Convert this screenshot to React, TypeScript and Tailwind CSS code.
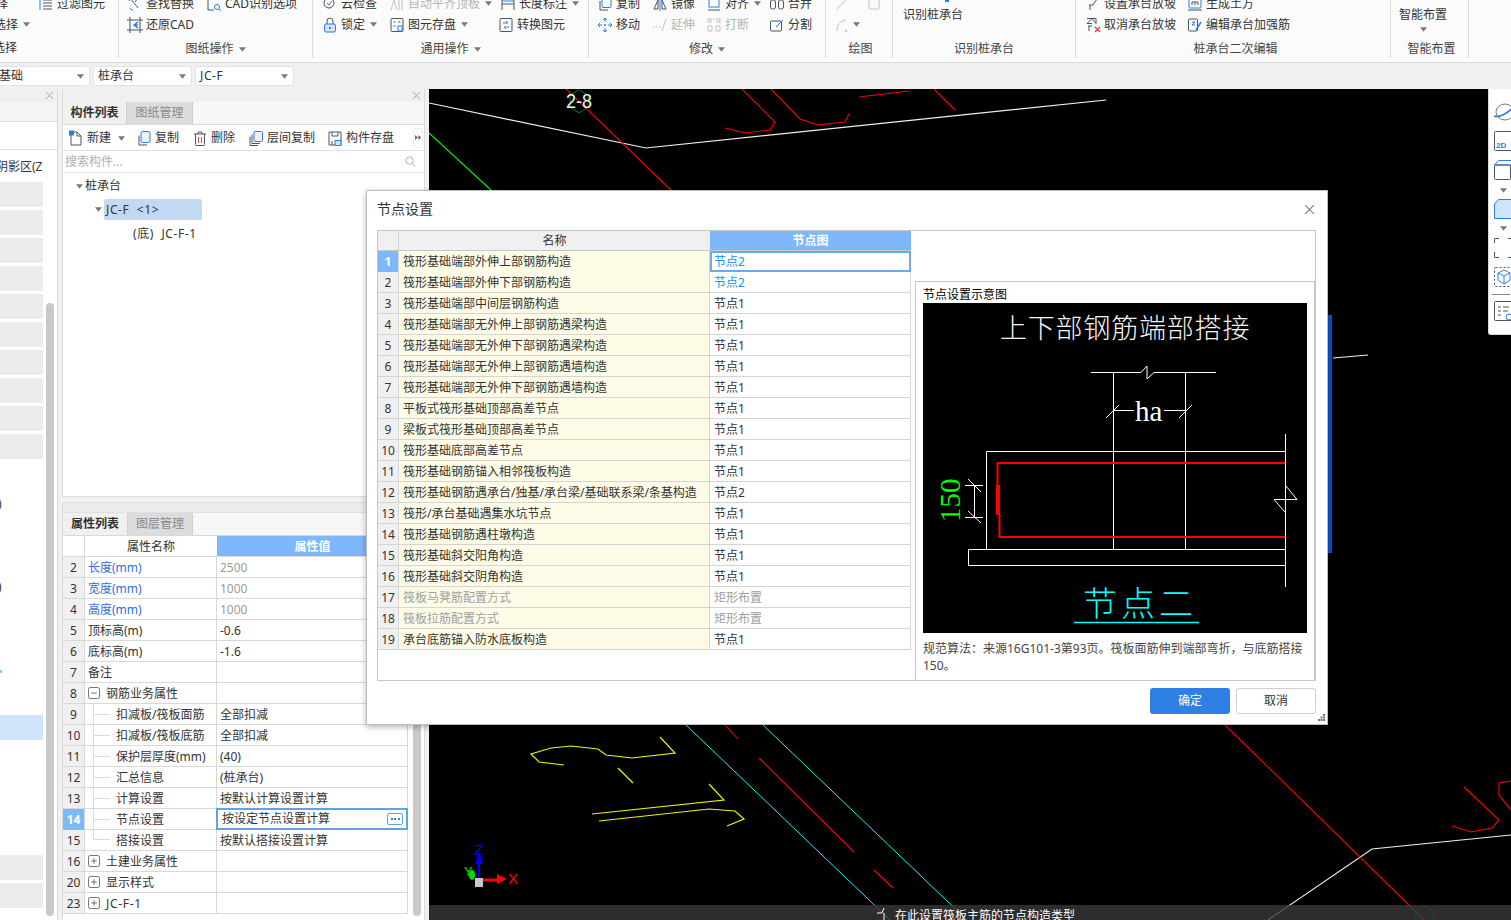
import type { ReactNode } from 'react';

const D = '#4b5563';
const B = '#2b7de9';
const G = '#c2c2c2';

const icons: Record<string, ReactNode> = {
  filter: <g stroke={D}><path d="M2 3v11" stroke={B} /><path d="M5 4h9M5 7h9M5 10h9M5 13h9" /></g>,
  find: <g stroke={D}><path d="M3 2l8 10M11 2l-3 4" /><path d="M3 12a3 3 0 0 0 3 2" stroke={B} /><path d="M2 5a4 4 0 0 1 3-3" stroke={B} /></g>,
  cad: <g stroke={D}><path d="M2 2v12h6" /><circle cx="11" cy="11" r="2.5" stroke={B} /><path d="M13 13l2 2" stroke={B} /></g>,
  check: <g stroke={D}><circle cx="7" cy="7" r="5" /><path d="M5 7l2 2 3-4" stroke={B} /></g>,
  level: <g stroke={G}><path d="M2 14l3-10 3 10M10 2v12M13 2v12" /></g>,
  dim: <g stroke={D}><path d="M2 2v12M14 2v12M2 8h12" /><path d="M2 5h12" stroke={B} /></g>,
  copy: <g stroke={D}><rect x="5" y="1.5" width="9" height="10" rx="1" stroke={B} /><path d="M3 5v9h8" /></g>,
  mirror: <g stroke={D}><path d="M8 1v14" stroke={B} /><path d="M6 4v9H2zM10 4v9h4z" /></g>,
  align: <g stroke={D}><path d="M2 14h12" /><rect x="3" y="3" width="10" height="8" stroke={B} /></g>,
  merge: <g stroke={D}><rect x="1.5" y="4" width="5" height="9" rx="2" /><rect x="9.5" y="4" width="5" height="9" rx="2" /></g>,
  restore: <g stroke={D}><path d="M3 0v16M13 0v16M0 3h16M0 13h16" /><path d="M11 5L7 8l4 3M7 8h4" stroke={B} strokeWidth="1.5" /></g>,
  lock: <g stroke={D}><rect x="2.5" y="7" width="11" height="8" rx="1.5" fill="#cfe3fb" stroke={B} /><path d="M5 7V4a3 3 0 0 1 6 0v3" /><path d="M8 10v2" strokeWidth="1.5" /></g>,
  save: <g stroke={D}><rect x="2" y="1.5" width="12" height="13" rx="1" /><path d="M4.5 5h2M9 5h2.500M4.500 9h2" /><rect x="9" y="9" width="4" height="5" stroke={B} /></g>,
  convert: <g stroke={D}><rect x="2" y="1.500" width="12" height="13" rx="1" /><path d="M5 6h5l-2-2M11 10H6l2 2" stroke={B} /></g>,
  move: <g stroke={B}><path d="M8 1v4M8 11v4M1 8h4M11 8h4M6 3l2-2 2 2M6 13l2 2 2-2M3 6L1 8l2 2M13 6l2 2-2 2" /><circle cx="8" cy="8" r="1" fill={B} stroke="none" /></g>,
  extend: <g stroke={G}><path d="M1 10h1.500M4 10h1.500M7 10h2" /><path d="M14 2L10 14" /></g>,
  breakIt: <g stroke={G}><rect x="2" y="2" width="3" height="3" /><rect x="11" y="2" width="3" height="3" /><path d="M2 9h4v5H2zM10 9h4v5h-4zM8 1v2" /></g>,
  split: <g stroke={D}><rect x="1.500" y="4" width="11" height="10" rx="1" /><path d="M7 10l7-7" stroke={B} /></g>,
  slope: <g stroke={D}><path d="M2 3h10l-4 6H4M5 9v5" /><path d="M6 2h8" stroke={B} /></g>,
  earth: <g stroke={D}><rect x="2" y="1" width="12" height="11" rx="1" stroke={B} /><path d="M5 9V6h6v3M8 6v3M1 14h14" /></g>,
  cancelSlope: <g stroke={D}><path d="M2 1.500h9v5l-4-5-5 5h5M3 9h4M4 9v5" /><path d="M10 10l5 5M15 10l-5 5" stroke="#e53935" strokeWidth="1.200" /></g>,
  rebar: <g stroke={D}><rect x="1.500" y="2" width="9" height="12" rx="1" /><path d="M5 5h3l-3 3h3" stroke={B} /><path d="M9 13l5-8" stroke={B} strokeWidth="1.500" /></g>,
  line: <g stroke={G}><path d="M3 13L13 3" /></g>,
  square: <g stroke={G}><rect x="3" y="3" width="10" height="10" rx="1" /></g>,
  arc: <g stroke={G}><path d="M3 14c0-6 3-10 9-11" /><circle cx="12" cy="14" r="1" /></g>,
  fresh: <g stroke={D}><path d="M3 1.500h6l4 4v9H3z" /><path d="M9 1.500v4h4" /><rect x="1" y="0" width="5" height="5" fill={B} stroke="none" /></g>,
  dup: <g stroke={D}><rect x="5" y="1" width="9" height="11" rx="1.500" fill="#e8f1fd" stroke={B} /><path d="M3 5v9.500h8" /></g>,
  trash: <g stroke={D}><path d="M2 3.500h12M6 3.500V1.500h4v2M3.500 3.500V14a1 1 0 0 0 1 1h7a1 1 0 0 0 1-1V3.500" /><path d="M6.500 6.500v6M9.500 6.500v6" stroke="#d9534f" /></g>,
  layerCopy: <g stroke={D}><rect x="6" y="1" width="8.500" height="10" rx="1" fill="#e8f1fd" stroke={B} /><path d="M4 4v9h8M2 6v9h8" /></g>,
  store: <g stroke={D}><path d="M2 1.500h12v13H2zM5 1.500v4h6v-4M5 14.500v-4" /><rect x="8" y="10" width="6" height="5" fill="#cfe3fb" stroke={B} /></g>,
};

function Icon({ name, size = 'w-[16px] h-[16px]' }: { name: string; size?: string }) {
  return (
    <svg viewBox="0 0 16 16" fill="none" strokeWidth="1" className={`shrink-0 ${size}`}>
      {icons[name]}
    </svg>
  );
}

function Caret({ className = '' }: { className?: string }) {
  return (
    <svg viewBox="0 0 8 5" className={`w-[7px] h-[5px] shrink-0 ${className}`}>
      <path d="M0 0h8L4 5z" fill="#7a7a7a" />
    </svg>
  );
}

function Tool({ icon, label, width, gray, caret }: { icon: string; label: string; width: string; gray?: boolean; caret?: boolean }) {
  return (
    <div className={`flex items-center gap-[3px] h-[21px] whitespace-nowrap ${width} ${gray ? 'text-[#b5b5b5]' : 'text-[#333]'}`}>
      <Icon name={icon} />
      <span>{label}</span>
      {caret && <Caret className="ml-[2px]" />}
    </div>
  );
}

function Group({ width, label, caret, children, labelClass = '' }: { width: string; label: string; caret?: boolean; children?: ReactNode; labelClass?: string }) {
  return (
    <div className={`flex flex-col shrink-0 h-[65px] border-r border-[#dcdcdc] ${width}`}>
      <div className="h-[47px] overflow-hidden">{children}</div>
      <div className={`flex items-center justify-center gap-[5px] h-[18px] text-[#444] ${labelClass}`}>
        <span>{label}</span>
        {caret && <Caret />}
      </div>
    </div>
  );
}

function Ribbon() {
  return (
    <div className="h-[63px] shrink-0 bg-[#fbfbfb] border-b border-[#d9d9d9] overflow-hidden">
      <div className="flex -mt-[7px]">
        <div className="flex flex-col shrink-0 w-[119px] h-[65px] border-r border-[#dcdcdc] text-[#333]">
          <div className="flex items-center h-[21px]">
            <span className="-ml-[16px] w-[54px]">选择</span>
            <Tool icon="filter" label="过滤图元" width="w-[70px]" />
          </div>
          <div className="flex items-center gap-[5px] h-[21px] -ml-[6px]">
            <span>选择</span>
            <Caret />
          </div>
          <div className="h-[5px]" />
          <div className="h-[18px] -ml-[7px]">选择</div>
        </div>
        <Group width="w-[194px]" label="图纸操作" caret>
          <div className="pl-[8px]">
            <div className="flex">
              <Tool icon="find" label="查找替换" width="w-[79px]" />
              <Tool icon="cad" label="CAD识别选项" width="w-[100px]" />
            </div>
            <Tool icon="restore" label="还原CAD" width="w-[90px]" />
          </div>
        </Group>
        <Group width="w-[276px]" label="通用操作" caret>
          <div className="pl-[9px]">
            <div className="flex">
              <Tool icon="check" label="云检查" width="w-[67px]" />
              <Tool icon="level" label="自动平齐顶板" width="w-[111px]" gray caret />
              <Tool icon="dim" label="长度标注" width="w-[84px]" caret />
            </div>
            <div className="flex">
              <Tool icon="lock" label="锁定" width="w-[67px]" caret />
              <Tool icon="save" label="图元存盘" width="w-[109px]" caret />
              <Tool icon="convert" label="转换图元" width="w-[80px]" />
            </div>
          </div>
        </Group>
        <Group width="w-[237px]" label="修改" caret>
          <div className="pl-[8px]">
            <div className="flex">
              <Tool icon="copy" label="复制" width="w-[55px]" />
              <Tool icon="mirror" label="镜像" width="w-[54px]" />
              <Tool icon="align" label="对齐" width="w-[63px]" caret />
              <Tool icon="merge" label="合并" width="w-[50px]" />
            </div>
            <div className="flex">
              <Tool icon="move" label="移动" width="w-[55px]" />
              <Tool icon="extend" label="延伸" width="w-[54px]" gray />
              <Tool icon="breakIt" label="打断" width="w-[63px]" gray />
              <Tool icon="split" label="分割" width="w-[50px]" />
            </div>
          </div>
        </Group>
        <Group width="w-[67px]" label="绘图" labelClass="pl-[3px]">
          <div className="pl-[8px]">
            <div className="flex h-[21px] items-center gap-[16px]">
              <Icon name="line" />
              <Icon name="square" />
            </div>
            <div className="flex h-[21px] items-center gap-[3px]">
              <Icon name="arc" />
              <Caret />
            </div>
          </div>
        </Group>
        <Group width="w-[183px]" label="识别桩承台">
          <div className="h-[9px] pl-[52px]"><div className="w-[4px] h-[9px] bg-[#2b7de9]" /></div>
          <div className="pl-[10px] mt-[2px] h-[21px] flex items-center text-[#333]">识别桩承台</div>
        </Group>
        <Group width="w-[315px]" label="桩承台二次编辑" labelClass="pl-[5px]">
          <div className="pl-[9px]">
            <div className="flex">
              <Tool icon="slope" label="设置承台放坡" width="w-[102px]" />
              <Tool icon="earth" label="生成土方" width="w-[80px]" />
            </div>
            <div className="flex">
              <Tool icon="cancelSlope" label="取消承台放坡" width="w-[102px]" />
              <Tool icon="rebar" label="编辑承台加强筋" width="w-[110px]" />
            </div>
          </div>
        </Group>
        <Group width="w-[78px]" label="智能布置" labelClass="pl-[4px]">
          <div className="pl-[8px] flex flex-col">
            <div className="h-[12px] -mt-[1px] w-[62px] flex justify-center items-start">
              <svg viewBox="0 0 16 10" className="w-[14px] h-[10px]"><path d="M2 0h5v8H2zM9 0h5v8H9z" fill={B} /></svg>
            </div>
            <div className="h-[21px] text-[#333] flex items-center">智能布置</div>
            <div className="w-[48px] flex justify-center mt-[2px]"><Caret /></div>
          </div>
        </Group>
      </div>
    </div>
  );
}

function Combo({ width, children }: { width: string; children: ReactNode }) {
  return (
    <div className={`flex items-center justify-between h-[20px] pl-[4px] pr-[5px] bg-white border border-[#e3e3e3] rounded-[3px] overflow-hidden whitespace-nowrap text-[#333] ${width}`}>
      <span>{children}</span>
      <Caret className="w-[5px] h-[3px]" />
    </div>
  );
}

function CloseMark({ className = '', color = '#a0a0a0' }: { className?: string; color?: string }) {
  return (
    <svg viewBox="0 0 10 10" className={`w-[9px] h-[9px] ${className}`} fill="none" stroke={color}>
      <path d="M1 1l8 8M9 1l-8 8" />
    </svg>
  );
}

function LeftPanel() {
  return (
    <div className="flex flex-col w-[58px] shrink-0 bg-white border-r border-[#d6d6d6] overflow-hidden text-[#333]">
      <div className="flex items-center justify-end h-[13px] pr-[3px] bg-[#f0f0f0]">
        <CloseMark />
      </div>
      <div className="h-[20px] bg-[#f5f5f5] border-b border-[#e0e0e0]" />
      <div className="h-[28px] border-b border-[#e0e0e0]" />
      <div className="flex flex-1">
        <div className="w-[43px] overflow-hidden">
          <div className="h-[32px] pt-[2px] flex items-center whitespace-nowrap -ml-[4px]">阴影区(Z</div>
          {[0, 1, 2, 3, 4, 5, 6, 7, 8, 9].map((i) => (
            <div key={i} className="h-[25px] mb-[3px] bg-[#ececec]" />
          ))}
          <div className="h-[20px] mt-[35px] -ml-[2px] leading-[20px]">)</div>
          <div className="h-[20px] mt-[63px] -ml-[2px] leading-[20px]">)</div>
          <div className="h-[3px] w-[2px] mt-[73px] bg-[#5fd6f5]" />
          <div className="h-[25px] mt-[42px] bg-[#cfe3fb]" />
          <div className="h-[25px] mt-[115px] bg-[#ececec]" />
          <div className="h-[25px] mt-[3px] bg-[#ececec]" />
        </div>
        <div className="w-[8px] ml-[3px] mt-[153px] h-[613px] rounded-[4px] bg-[#c9c9c9]" />
      </div>
    </div>
  );
}

function Tab({ active, children, width }: { active?: boolean; children: ReactNode; width: string }) {
  return (
    <div className={`flex items-center justify-center h-[22px] ${width} ${active ? 'bg-[#f0f0f0] text-[#333] font-bold' : 'bg-[#dcdcdc] text-[#8a8a8a]'} border-r border-[#cfcfcf]`}>
      {children}
    </div>
  );
}

function ListTool({ icon, label, caret, width }: { icon: string; label: string; caret?: boolean; width: string }) {
  return (
    <div className={`flex items-center gap-[3px] shrink-0 pt-[1px] ${width}`}>
      <Icon name={icon} size="w-[16px] h-[17px]" />
      <span>{label}</span>
      {caret && <Caret className="ml-[4px] w-[5px] h-[3px]" />}
    </div>
  );
}

function ComponentList() {
  return (
    <div className="flex flex-col h-[408px] bg-white border border-[#dcdcdc] border-t-0">
      <div className="flex items-center justify-end h-[13px] pr-[3px] bg-[#f0f0f0]">
        <CloseMark />
      </div>
      <div className="flex h-[23px] bg-[#f7f7f7] border-b border-[#d9d9d9]">
        <Tab active width="w-[64px]">构件列表</Tab>
        <Tab width="w-[66px]">图纸管理</Tab>
      </div>
      <div className="flex items-center h-[26px] pl-[5px] border-b border-[#e3e3e3] text-[#333]">
        <ListTool icon="fresh" label="新建" caret width="w-[68px]" />
        <ListTool icon="dup" label="复制" width="w-[56px]" />
        <ListTool icon="trash" label="删除" width="w-[56px]" />
        <ListTool icon="layerCopy" label="层间复制" width="w-[79px]" />
        <ListTool icon="store" label="构件存盘" width="w-[86px]" />
        <div className="flex items-center justify-center w-[10px] h-[20px] rounded-[3px] border border-[#ececec]">
          <svg viewBox="0 0 8 6" className="w-[7px] h-[5px]"><path d="M0 0l3 3-3 3zM4 0l3 3-3 3z" fill="#555" /></svg>
        </div>
      </div>
      <div className="flex items-center justify-between h-[22px] pl-[2px] pr-[8px] border-b border-[#e3e3e3] text-[#b0b0b0]">
        <span>搜索构件...</span>
        <svg viewBox="0 0 12 12" className="w-[11px] h-[11px]" fill="none" stroke="#aaa"><circle cx="5" cy="5" r="4" /><path d="M8 8l3 3" /></svg>
      </div>
      <div className="flex-1 text-[#333]">
        <div className="flex items-center h-[24px] mt-[1px] pl-[13px] gap-[2px]">
          <Caret className="w-[6px] h-[4px]" />
          <span>桩承台</span>
        </div>
        <div className="flex items-center h-[22px] pl-[32px]">
          <Caret className="w-[6px] h-[4px] mr-[2px]" />
          <div className="flex items-center w-[98px] h-[21px] pl-[2px] pt-[1px] bg-[#c1d9f2] rounded-[2px] whitespace-pre tracking-[0.6px]">JC-F  &lt;1&gt;</div>
        </div>
        <div className="flex items-center h-[28px] pl-[70px] whitespace-pre tracking-[0.6px]">(底)  JC-F-1</div>
      </div>
    </div>
  );
}

type PropRow = {
  no: number;
  name: string;
  value?: string;
  blue?: boolean;
  muted?: boolean;
  tree?: 'open' | 'closed';
  child?: boolean;
  last?: boolean;
  selected?: boolean;
};

const propRows: PropRow[] = [
  { no: 2, name: '长度(mm)', value: '2500', blue: true, muted: true },
  { no: 3, name: '宽度(mm)', value: '1000', blue: true, muted: true },
  { no: 4, name: '高度(mm)', value: '1000', blue: true, muted: true },
  { no: 5, name: '顶标高(m)', value: '-0.6' },
  { no: 6, name: '底标高(m)', value: '-1.6' },
  { no: 7, name: '备注' },
  { no: 8, name: '钢筋业务属性', tree: 'open' },
  { no: 9, name: '扣减板/筏板面筋', value: '全部扣减', child: true },
  { no: 10, name: '扣减板/筏板底筋', value: '全部扣减', child: true },
  { no: 11, name: '保护层厚度(mm)', value: '(40)', child: true },
  { no: 12, name: '汇总信息', value: '(桩承台)', child: true },
  { no: 13, name: '计算设置', value: '按默认计算设置计算', child: true },
  { no: 14, name: '节点设置', value: '按设定节点设置计算', child: true, selected: true },
  { no: 15, name: '搭接设置', value: '按默认搭接设置计算', child: true, last: true },
  { no: 16, name: '土建业务属性', tree: 'closed' },
  { no: 20, name: '显示样式', tree: 'closed' },
  { no: 23, name: 'JC-F-1', tree: 'closed' },
];

function TreeBox({ open }: { open: boolean }) {
  return (
    <svg viewBox="0 0 13 13" className="w-[12px] h-[12px] shrink-0 mr-[6px]" fill="none" stroke="#666">
      <rect x="0.5" y="0.5" width="12" height="12" rx="2" />
      <path d={open ? 'M3.500 6.500h6' : 'M3.500 6.500h6M6.500 3.500v6'} />
    </svg>
  );
}

function PropertyTable() {
  return (
    <div className="flex flex-col flex-1 mt-[5px] bg-white border-x border-[#dcdcdc]">
      <div className="h-[11px] bg-[#ececec] border-y border-[#e0e0e0]" />
      <div className="flex h-[23px] bg-[#f7f7f7] border-b border-[#d9d9d9]">
        <Tab active width="w-[65px]">属性列表</Tab>
        <Tab width="w-[65px]">图层管理</Tab>
      </div>
      <div className="flex flex-1">
        <div className="w-[345px] shrink-0">
          <div className="grid grid-cols-[22px_132px_191px] h-[21px] border-b border-[#d8d8d8]">
            <div className="border-r border-[#d8d8d8]" />
            <div className="flex items-center justify-center pt-[1px] text-[#333]">属性名称</div>
            <div className="flex items-center justify-center pt-[1px] bg-[#7cb8fb] text-white font-bold">属性值</div>
          </div>
          {propRows.map((r) => (
            <div key={r.no} className="grid grid-cols-[22px_132px_191px] h-[21px] border-b border-[#d8d8d8]">
              <div className={`flex items-center justify-center pt-[1px] border-r border-[#d8d8d8] ${r.selected ? 'bg-[#7cb8fb] text-white font-bold' : 'bg-[#f0f0f0] text-[#333]'}`}>{r.no}</div>
              <div className={`flex items-center h-[20px] border-r border-[#d8d8d8] whitespace-nowrap overflow-hidden ${r.child ? 'pl-[8px]' : 'pl-[3px]'} ${r.blue ? 'text-[#2f6fe0]' : 'text-[#333]'}`}>
                {r.tree && <TreeBox open={r.tree === 'open'} />}
                {r.child && (
                  <div className={`flex items-center w-[23px] shrink-0 border-l border-[#dcdcdc] ${r.last ? 'self-start h-[10px]' : 'h-[21px]'}`}>
                    <div className={`w-[16px] h-px bg-[#dcdcdc] ${r.last ? 'mt-[9px]' : ''}`} />
                  </div>
                )}
                <span className={`mt-[1px] ${r.name === 'JC-F-1' ? 'tracking-[0.7px]' : ''}`}>{r.name}</span>
              </div>
              {r.selected ? (
                <div className="flex items-center justify-between h-[22px] -mt-px -ml-px w-[192px] pl-[4px] pr-[3px] border-2 border-[#5fa2e6] text-[#333]">
                  <span>{r.value}</span>
                  <div className="flex items-center justify-center gap-[1.500px] w-[16px] h-[12px] rounded-[2px] border border-[#5fa2e6]">
                    <i className="w-[2px] h-[2px] bg-[#3d85d8]" />
                    <i className="w-[2px] h-[2px] bg-[#3d85d8]" />
                    <i className="w-[2px] h-[2px] bg-[#3d85d8]" />
                  </div>
                </div>
              ) : (
                <div className={`flex items-center pl-[3px] pt-[1px] border-r border-[#d8d8d8] ${r.muted ? 'text-[#9a9a9a]' : 'text-[#333]'}`}>{r.value}</div>
              )}
            </div>
          ))}
        </div>
        <div className="w-[8px] ml-[5px] mt-[70px] h-[310px] rounded-[4px] bg-[#c9c9c9]" />
      </div>
    </div>
  );
}

function CanvasDrawing() {
  return (
    <svg viewBox="429 89 1082 831" className="absolute inset-0 w-full h-full" fill="none">
      <g stroke="#f0f0f0" strokeWidth="1.200">
        <path d="M429 103L646 148L1106 100" />
        <path d="M1511 835L1372 849L1268 920" />
        <path d="M1333 358L1368 355" />
      </g>
      <g stroke="#ff0000" strokeWidth="1.100">
        <path d="M565 88L672 191" />
        <path d="M742 89L775 122L770 130L745 133L725 128" />
        <path d="M771 89L800 119L818 125L845 122L849 114" />
        <path d="M859 97L909 91M934 89L955 110" />
        <path d="M725 725L738 739M759 758L854 852M874 870L893 888M913 908L925 920" />
        <path d="M1225 725L1416 912L1425 920" />
        <path d="M1464 787L1499 820L1492 828L1471 832L1452 826" />
        <path d="M1511 781L1499 783L1499 795L1511 810" />
      </g>
      <g stroke="#00f000" strokeWidth="1.100">
        <path d="M429 133L492 191M515 196L523 191" />
      </g>
      <path d="M579 90l9 5v12l-9 6-9-6V95z" stroke="#0b7a0b" />
      <text x="566" y="108" fill="#f2f2f2" fontSize="20" textLength="26" lengthAdjust="spacingAndGlyphs" fontFamily="'Liberation Sans', sans-serif">2-8</text>
      <path d="M1425 906l9 5v12h-18v-12z" stroke="#0b5a0b" />
      <g stroke="#19f0f0" strokeWidth="1">
        <path d="M686 725L890 920" />
        <path d="M763 725L967 920" />
      </g>
      <g stroke="#f0f000" strokeWidth="1.200">
        <path d="M660 737L675 753L632 758L606 755L598 749L571 746L551 748L531 754L539 762L564 765" />
        <path d="M618 768L633 783" />
        <path d="M709 784L724 800L592 814" />
        <path d="M599 821L709 809L735 811L744 819L727 826" />
      </g>
      <path d="M479 880V858" stroke="#0000ff" strokeWidth="2" />
      <path d="M479 852l-4 12h8z" fill="#0000ff" />
      <path d="M479 880h18" stroke="#ff0000" strokeWidth="3" />
      <path d="M507 879l-10-5v10z" fill="#ff0000" />
      <ellipse cx="472" cy="875" rx="3" ry="5" fill="#00e000" />
      <rect x="475" y="878" width="8" height="9" fill="#c8c8c8" />
      <text x="474" y="855" fill="#0000ff" fontSize="15" fontFamily="'Liberation Sans', sans-serif">Z</text>
      <text x="508" y="884" fill="#ff0000" fontSize="15" fontFamily="'Liberation Sans', sans-serif">X</text>
      <text x="464" y="876" fill="#00e000" fontSize="13" fontFamily="'Liberation Sans', sans-serif">Y</text>
    </svg>
  );
}

function ViewIcon({ children, height }: { children: ReactNode; height: string }) {
  return (
    <svg viewBox="0 0 24 20" className={`w-[24px] shrink-0 ${height}`} fill="none" stroke={D}>
      {children}
    </svg>
  );
}

function ViewBar() {
  return (
    <div className="absolute right-0 top-0 flex flex-col items-start w-[23px] h-[246px] pl-[5px] pt-[13px] overflow-hidden bg-white border-l border-b border-[#d9d9d9] rounded-bl-[3px]">
      <div className="-ml-[2px]">
        <ViewIcon height="h-[20px]">
          <ellipse cx="13" cy="10" rx="9" ry="8" stroke="#777" />
          <path d="M2 14c4 2 14-2 20-10" stroke={B} strokeWidth="1.500" />
        </ViewIcon>
      </div>
      <div className="mt-[9px]">
        <svg viewBox="0 0 24 20" className="w-[24px] h-[20px]" fill="none" stroke={D}>
          <rect x="0.500" y="0.500" width="23" height="19" rx="1" />
          <text x="2" y="17" fill={B} stroke="none" fontSize="8" fontWeight="700" fontFamily="'Liberation Sans', sans-serif">2D</text>
        </svg>
      </div>
      <div className="mt-[9px]">
        <ViewIcon height="h-[20px]">
          <path d="M0.500 5l4-4.500H24M0.500 5H17" stroke={B} />
          <rect x="0.500" y="5" width="16" height="14.500" rx="1" />
        </ViewIcon>
      </div>
      <Caret className="ml-[6px] mt-[8px]" />
      <div className="mt-[6px]">
        <ViewIcon height="h-[20px]">
          <path d="M0.500 5l4-4.500H24V19.500H0.500z" fill="#cfe3fb" stroke={B} />
        </ViewIcon>
      </div>
      <Caret className="ml-[6px] mt-[7px]" />
      <div className="mt-[7px]">
        <ViewIcon height="h-[20px]">
          <path d="M0.500 5V1a.5.5 0 0 1 .5-.5H5M0.500 14v5a.5.5 0 0 0 .5.5H5M14 .500h5M14 19.500h5" />
        </ViewIcon>
      </div>
      <div className="mt-[9px]">
        <ViewIcon height="h-[20px]">
          <rect x="0.500" y="0.500" width="23" height="19" rx="1" strokeDasharray="2 2" />
          <path d="M10 3l6 3v7l-6 4-6-4V6zM4 6l6 3 6-3M10 9v8" stroke={B} />
        </ViewIcon>
      </div>
      <div className="w-[18px] h-px -ml-[2px] mt-[7px] bg-[#888]" />
      <div className="mt-[6px]">
        <ViewIcon height="h-[20px]">
          <rect x="0.500" y="0.500" width="23" height="19" rx="1" />
          <path d="M4 6h3M9 6h6M4 10h3M9 10h5M4 14h3" />
          <circle cx="15" cy="16" r="3" stroke={B} />
        </ViewIcon>
      </div>
    </div>
  );
}

const nodeRows: { name: string; node: string; blue?: boolean; off?: boolean }[] = [
  { name: '筏形基础端部外伸上部钢筋构造', node: '节点2', blue: true },
  { name: '筏形基础端部外伸下部钢筋构造', node: '节点2', blue: true },
  { name: '筏形基础端部中间层钢筋构造', node: '节点1' },
  { name: '筏形基础端部无外伸上部钢筋遇梁构造', node: '节点1' },
  { name: '筏形基础端部无外伸下部钢筋遇梁构造', node: '节点1' },
  { name: '筏形基础端部无外伸上部钢筋遇墙构造', node: '节点1' },
  { name: '筏形基础端部无外伸下部钢筋遇墙构造', node: '节点1' },
  { name: '平板式筏形基础顶部高差节点', node: '节点1' },
  { name: '梁板式筏形基础顶部高差节点', node: '节点1' },
  { name: '筏形基础底部高差节点', node: '节点1' },
  { name: '筏形基础钢筋锚入相邻筏板构造', node: '节点1' },
  { name: '筏形基础钢筋遇承台/独基/承台梁/基础联系梁/条基构造', node: '节点2' },
  { name: '筏形/承台基础遇集水坑节点', node: '节点1' },
  { name: '筏形基础钢筋遇柱墩构造', node: '节点1' },
  { name: '筏形基础斜交阳角构造', node: '节点1' },
  { name: '筏形基础斜交阴角构造', node: '节点1' },
  { name: '筏板马凳筋配置方式', node: '矩形布置', off: true },
  { name: '筏板拉筋配置方式', node: '矩形布置', off: true },
  { name: '承台底筋锚入防水底板构造', node: '节点1' },
];

function NodeSketch() {
  const serif = "'Liberation Serif', serif";
  const cjk = "'Noto Sans CJK SC', sans-serif";
  return (
    <svg viewBox="923 303 384 330" className="w-[384px] h-[330px] shrink-0 bg-black" fill="none">
      <text x="1000" y="338" fill="#f4f4f4" fontSize="27" letterSpacing="0.800" fontFamily={cjk} fontWeight="300">上下部钢筋端部搭接</text>
      <g stroke="#fff" strokeWidth="1">
        <path d="M1091 372.500H1141L1147 366V379L1154 372.500H1216" />
        <path d="M1113.500 372V549M1185.500 372V549" />
        <path d="M1113 410.500H1134M1164 410.500H1185" />
        <path d="M1106 418L1119 405M1179 418L1192 405" />
        <path d="M986.500 549V451.500H1285.500" />
        <path d="M1285.500 434V587" />
        <path d="M968.500 565.500V549.500H1285.500M968.500 565.500H1285.500" />
        <path d="M1286 486L1297 499.500H1274L1285 512" />
        <path d="M965 485.500H983M965 517.500H983M974.500 485.500V517.500" />
        <path d="M968 479L981 492M968 511L981 523" />
      </g>
      <text x="1135" y="421" fill="#fff" fontSize="29" fontFamily={serif}>ha</text>
      <g stroke="#ff0000" strokeWidth="2">
        <path d="M1285 463H997.500V486" />
        <path d="M999.500 515V537H1285" />
        <path d="M998 485V515" strokeWidth="4" />
      </g>
      <text transform="translate(960 522) rotate(-90)" fill="#00ff00" fontSize="29" fontFamily={serif}>150</text>
      <text x="1083" y="616" fill="#00ffff" fontSize="34" letterSpacing="4" fontFamily={cjk} fontWeight="300">节点二</text>
      <path d="M1074 622.500H1199" stroke="#00ffff" strokeWidth="1.500" />
    </svg>
  );
}

function NodeDialog() {
  return (
    <div className="absolute left-[366px] top-[190px] w-[962px] h-[535px] flex flex-col bg-white border border-[#bdbdbd] shadow-[0_2px_6px_rgba(0,0,0,0.3)] text-[#333]">
      <div className="flex items-center justify-between h-[39px] shrink-0 pl-[10px] pr-[12px] pb-[3px]">
        <span className="text-[14px]">节点设置</span>
        <CloseMark className="w-[11px] h-[11px]" color="#7d7d7d" />
      </div>
      <div className="flex h-[451px] ml-[10px] w-[939px] border border-[#c6c6c6]">
        <div className="w-[533px] shrink-0">
          <div className="grid grid-cols-[21px_311px_201px] h-[20px] border-b border-[#c6c6c6]">
            <div className="bg-[#f0f0f0] border-r border-[#d4d4d4]" />
            <div className="flex items-center justify-center pt-[1px] bg-[#f0f0f0]">名称</div>
            <div className="flex items-center justify-center pt-[1px] bg-[#7cb8fb] text-white font-bold">节点图</div>
          </div>
          {nodeRows.map((r, i) => (
            <div key={i} className="grid grid-cols-[21px_311px_201px] h-[21px] border-b border-[#d4d4d4]">
              <div className={`flex items-center justify-center pt-[1px] border-r border-[#d4d4d4] ${i === 0 ? 'bg-[#7cb8fb] text-white font-bold' : 'bg-[#f0f0f0]'}`}>{i + 1}</div>
              <div className={`flex items-center pl-[4px] pt-[1px] bg-[#fefce6] border-r border-[#d4d4d4] whitespace-nowrap ${r.off ? 'text-[#a0a0a0]' : ''}`}>{r.name}</div>
              <div className={`flex items-center ${i === 0 ? 'border-2 border-[#6fa8e8] h-[21px] pl-[2px]' : 'pl-[4px] pt-[1px] border-r border-[#d4d4d4]'} ${r.blue ? 'text-[#1890ff]' : ''} ${r.off ? 'text-[#a0a0a0]' : ''}`}>{r.node}</div>
            </div>
          ))}
        </div>
        <div className="flex-1 flex flex-col pl-[4px]">
          <div className="h-[50px] shrink-0" />
          <div className="flex flex-col flex-1 px-[7px] border border-[#c6c6c6] border-b-0">
            <div className="h-[21px] pt-[5px] leading-[16px] text-black shrink-0">节点设置示意图</div>
            <NodeSketch />
            <p className="mt-[7px] leading-[17px] text-[#444]">规范算法：来源16G101-3第93页。筏板面筋伸到端部弯折，与底筋搭接150。</p>
          </div>
        </div>
      </div>
      <div className="flex justify-end gap-[6px] mt-[7px] pr-[11px]">
        <div className="flex items-center justify-center w-[80px] h-[26px] rounded-[3px] bg-[#2f80e4] text-white">确定</div>
        <div className="flex items-center justify-center w-[80px] h-[26px] rounded-[3px] bg-white border border-[#d0d0d0]">取消</div>
      </div>
      <div className="flex justify-end pr-[2px]">
        <svg viewBox="0 0 7 7" className="w-[7px] h-[7px]"><path d="M5 0h2v2H5zM2.500 2.500h2v2h-2zM5 2.500h2v2H5zM0 5h2v2H0zM2.500 5h2v2h-2zM5 5h2v2H5z" fill="#777" /></svg>
      </div>
    </div>
  );
}

export default function App() {
  return (
    <div className="relative flex flex-col w-[1511px] h-[920px] overflow-hidden bg-[#f0f0f0] text-[12px] leading-[16px] [font-family:'Noto_Sans','Noto_Sans_CJK_SC',sans-serif]">
      <Ribbon />
      <div className="flex items-start gap-[3px] h-[26px] shrink-0 pt-[3px] -ml-[6px]">
        <Combo width="w-[96px]">基础</Combo>
        <Combo width="w-[99px]">桩承台</Combo>
        <Combo width="w-[99px]"><span className="tracking-[0.6px]">JC-F</span></Combo>
      </div>
      <div className="flex flex-1 min-h-0">
        <LeftPanel />
        <div className="flex flex-col w-[363px] ml-[4px] shrink-0">
          <ComponentList />
          <PropertyTable />
        </div>
        <div className="w-[4px] shrink-0" />
        <div className="relative flex-1 bg-black overflow-hidden">
          <CanvasDrawing />
          <div className="absolute left-[899px] top-[226px] w-[4px] h-[238px] bg-[#0c50c8]" />
          <ViewBar />
          <div className="absolute left-0 right-0 bottom-0 flex h-[15px] pl-[448px] pt-[3px] overflow-hidden bg-[rgba(56,56,56,0.8)] text-white">
            <svg viewBox="0 0 14 12" className="w-[14px] h-[12px] mr-[4px] shrink-0" fill="none" stroke="#fff"><path d="M7 0L5 5H0M7 5v7" /></svg>
            <span className="whitespace-nowrap">在此设置筏板主筋的节点构造类型</span>
          </div>
        </div>
      </div>
      <NodeDialog />
    </div>
  );
}
